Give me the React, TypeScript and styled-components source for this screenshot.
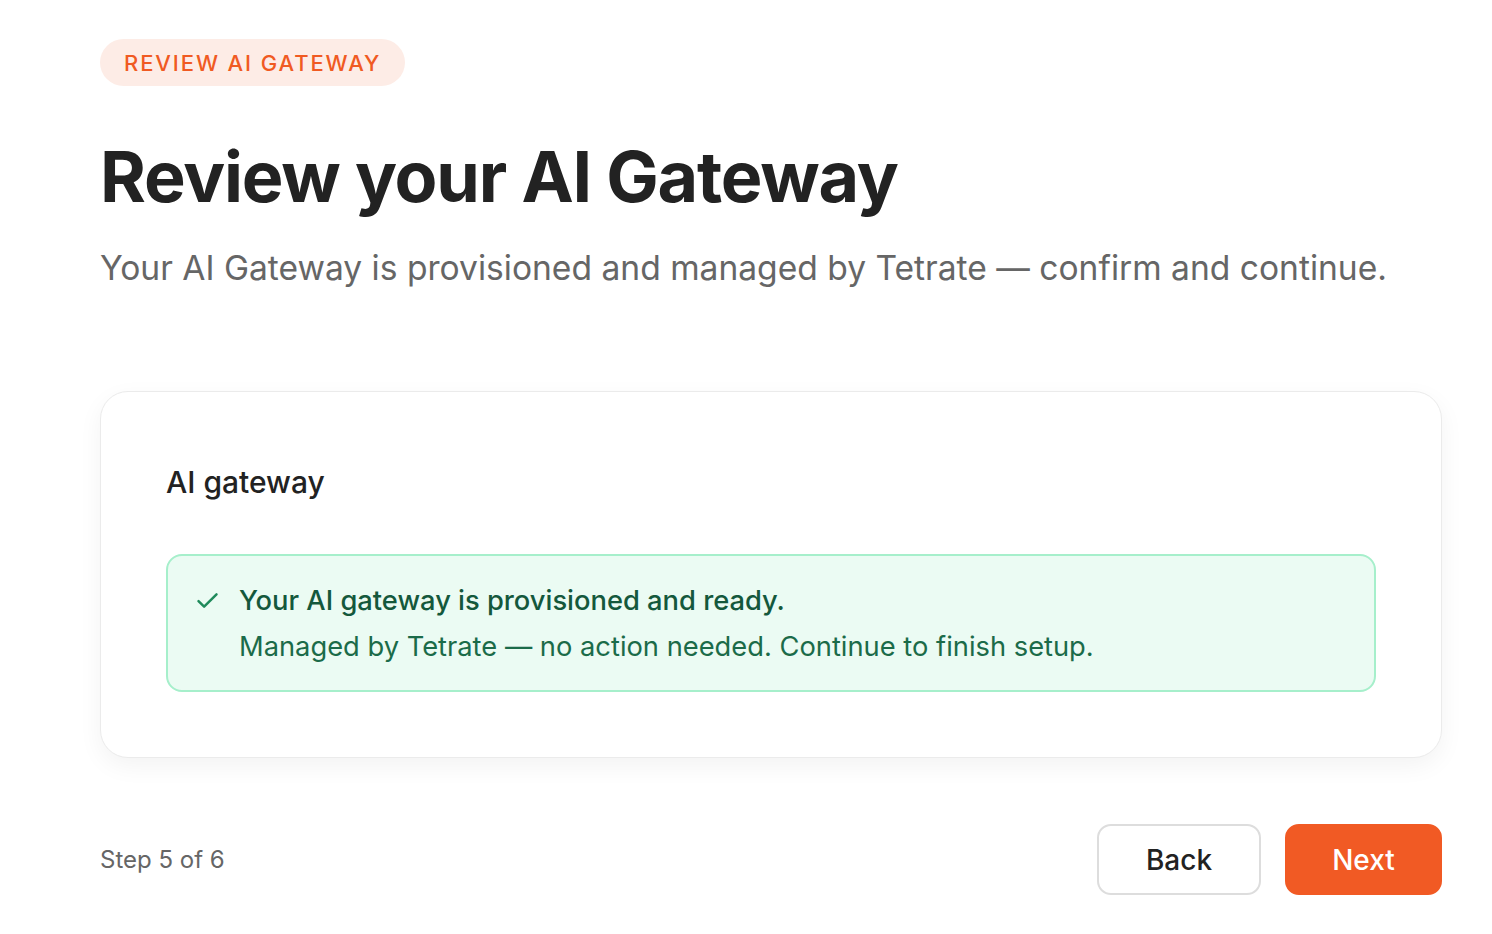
import * as React from 'react'
import styled, { createGlobalStyle } from 'styled-components'

const GlobalStyle = createGlobalStyle`
    html, body {
        margin: 0;
        padding: 0;
        background: #ffffff;
        font-family: Inter, "Noto Sans", sans-serif;
        color: #222222;
    }
`

const CheckIcon = () => (
    <svg width="27" height="27" viewBox="0 0 24 24" fill="none" stroke="#1f8a5b" strokeWidth="2.2" strokeLinecap="round" strokeLinejoin="round">
        <path d="M4 12.5l5 5L20 6.5" />
    </svg>
)

export default () => (
    <Page>
        <GlobalStyle />
        <Badge>Review AI Gateway</Badge>
        <Title>Review your AI Gateway</Title>
        <Subtitle>Your AI Gateway is provisioned and managed by Tetrate — confirm and continue.</Subtitle>
        <Card>
            <CardTitle>AI gateway</CardTitle>
            <Notice>
                <NoticeIcon><CheckIcon /></NoticeIcon>
                <NoticeBody>
                    <NoticeHead>Your AI gateway is provisioned and ready.</NoticeHead>
                    <NoticeText>Managed by Tetrate — no action needed. Continue to finish setup.</NoticeText>
                </NoticeBody>
            </Notice>
        </Card>
        <Footer>
            <StepLabel>Step 5 of 6</StepLabel>
            <Actions>
                <Button>Back</Button>
                <Button primary>Next</Button>
            </Actions>
        </Footer>
    </Page>
)

const Page = styled.div`
    box-sizing: border-box;
    width: 1492px;
    padding: 39px 50px 0 100px;
`

const Badge = styled.div`
    display: inline-flex;
    align-items: center;
    height: 47px;
    padding: 0 24px;
    border-radius: 24px;
    background: #fdece6;
    color: #f05a22;
    font-size: 22px;
    font-weight: 500;
    letter-spacing: 1.9px;
    text-transform: uppercase;
`

const Title = styled.h1`
    margin: 47px 0 0;
    font-size: 70px;
    line-height: 88px;
    font-weight: 700;
    letter-spacing: -1.2px;
    color: #222222;
`

const Subtitle = styled.p`
    margin: 25px 0 0;
    font-size: 33.6px;
    line-height: 44px;
    font-weight: 400;
    color: #666666;
`

const Card = styled.div`
    box-sizing: border-box;
    margin-top: 101px;
    width: 1342px;
    padding: 70px 65px 65px;
    border: 1.5px solid #ebebeb;
    border-radius: 28px;
    background: #ffffff;
    box-shadow: 0 8px 24px rgba(0, 0, 0, 0.05);
`

const CardTitle = styled.h2`
    margin: 0;
    font-size: 30px;
    line-height: 40px;
    font-weight: 500;
    color: #222222;
`

const Notice = styled.div`
    display: flex;
    gap: 18px;
    margin-top: 52px;
    padding: 26px 28px 24px 26px;
    border: 2px solid #a6efcb;
    border-radius: 16px;
    background: #ebfbf3;
`

const NoticeIcon = styled.div`
    display: flex;
    padding-top: 5px;
`

const NoticeBody = styled.div`
    display: flex;
    flex-direction: column;
    gap: 8px;
`

const NoticeHead = styled.div`
    font-size: 27.3px;
    line-height: 38px;
    font-weight: 500;
    color: #14583c;
`

const NoticeText = styled.div`
    font-size: 27.3px;
    line-height: 38px;
    font-weight: 400;
    color: #1b6b49;
`

const Footer = styled.div`
    display: flex;
    align-items: center;
    justify-content: space-between;
    width: 1342px;
    margin-top: 66px;
`

const StepLabel = styled.span`
    font-size: 24px;
    color: #666666;
`

const Actions = styled.div`
    display: flex;
    gap: 24px;
`

const Button = styled.button<{ primary?: boolean }>`
    box-sizing: border-box;
    height: 71px;
    min-width: ${p => p.primary ? '157px' : '164px'};
    padding: 0 40px;
    border-radius: 14px;
    border: 2px solid ${p => p.primary ? '#f15a24' : '#dddddd'};
    background: ${p => p.primary ? '#f15a24' : '#ffffff'};
    color: ${p => p.primary ? '#ffffff' : '#222222'};
    font-family: Inter, "Noto Sans", sans-serif;
    font-size: 28px;
    font-weight: 500;
    cursor: pointer;
`
